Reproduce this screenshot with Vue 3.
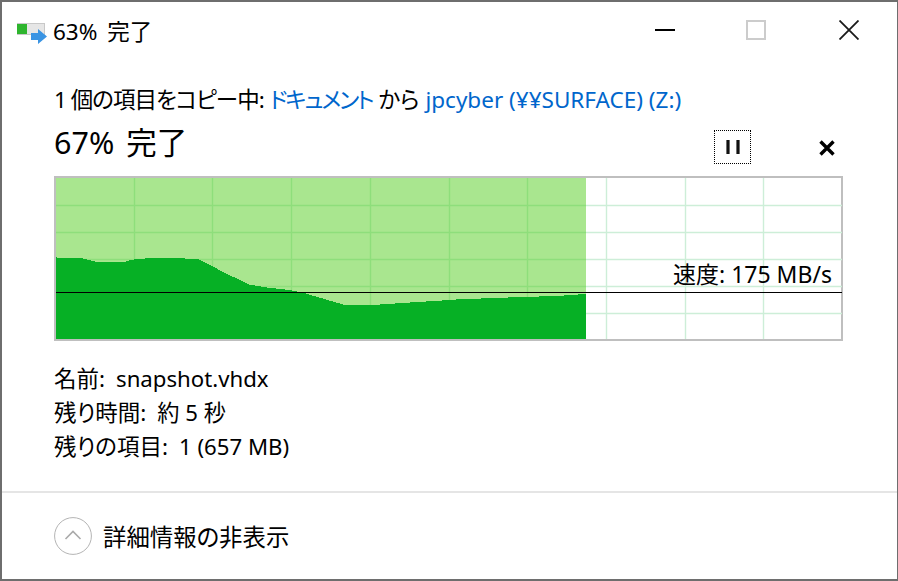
<script setup>
const verticals = [134, 212, 291, 370, 449, 527, 606, 685, 763]
const horizontals = [205, 232, 259, 286, 313]

// graph coords are page coords minus the plot's top-left (56, 178)
const curve = [
  [56, 256], [57, 257.7], [81, 258], [96, 261.7], [125, 261.7], [132, 259.7], [150, 258],
  [172, 258], [198, 259], [210, 265], [227, 274], [240, 280], [248, 284.3], [265, 287.3],
  [290, 290], [305, 293.3], [338, 303], [345, 305], [373, 305], [407, 302.7], [445, 300.3],
  [463, 299], [488, 298.3], [520, 297], [557, 296], [570, 295], [586, 294]
]
const areaPoints = [...curve, [586, 339], [56, 339]]
  .map(([x, y]) => `${x - 56},${y - 178}`)
  .join(' ')
</script>

<template>
  <div class="window">
    <header class="titlebar">
      <svg class="app-icon" width="30" height="22" viewBox="0 0 30 22">
        <rect x="0.5" y="0.5" width="27" height="11" fill="#e6e6e6" stroke="#c8c8c8" />
        <rect x="0" y="1" width="10" height="10" fill="#2eb52e" />
        <path d="M14 10h7V6l9 7.5-9 7.5v-4h-7z" fill="#3a94e3" />
      </svg>
      <span class="title">63% 完了</span>
      <div class="controls">
        <svg width="20" height="20" viewBox="0 0 20 20"><path d="M0 10h20" stroke="#000" stroke-width="2" /></svg>
        <svg class="maximize" width="20" height="20" viewBox="0 0 20 20"><rect x="1" y="1" width="18" height="18" fill="none" stroke="#ccc" stroke-width="2" /></svg>
        <svg width="20" height="20" viewBox="0 0 20 20"><path d="M0.5 0.5l19 19M19.5 0.5l-19 19" stroke="#1a1a1a" stroke-width="1.8" /></svg>
      </div>
    </header>

    <main class="content">
      <p class="source">
        <span class="tight">1 個の項目をコピー中:</span> <a class="link kana">ドキュメント</a> から <a class="link">jpcyber (¥¥SURFACE) (Z:)</a>
      </p>
      <div class="progress-row">
        <h1 class="percent">67% 完了</h1>
        <button class="pause" type="button">
          <svg width="14" height="14" viewBox="0 0 14 14"><path d="M2 0v14M12 0v14" stroke="#111" stroke-width="3.2" /></svg>
        </button>
        <button class="cancel" type="button">
          <svg width="16" height="16" viewBox="0 0 16 16"><path d="M1.5 1.5l13 13M14.5 1.5l-13 13" stroke="#000" stroke-width="3.4" /></svg>
        </button>
      </div>

      <div class="graph">
        <svg class="plot" width="786" height="161" viewBox="0 0 786 161">
          <rect x="0" y="0" width="530" height="161" fill="#a9e68f" />
          <g v-for="x in verticals" :key="x" stroke-width="1.4">
            <path :d="`M${x - 55.5} 0V161`" :stroke="x < 586 ? '#8ede7b' : '#cdeed8'" />
          </g>
          <g v-for="y in horizontals" :key="y" stroke-width="1.4">
            <path :d="`M0 ${y - 177.5}H530`" stroke="#8ede7b" />
            <path :d="`M530 ${y - 177.5}H786`" stroke="#cdeed8" />
          </g>
          <polygon :points="areaPoints" fill="#06b025" shape-rendering="crispEdges" />
          <path d="M0 114.5H786" stroke="#000" />
        </svg>
        <span class="speed">速度: 175 MB/s</span>
      </div>

      <dl class="details">
        <div class="detail"><dt>名前:</dt><dd>snapshot.vhdx</dd></div>
        <div class="detail"><dt>残り時間:</dt><dd>約 5 秒</dd></div>
        <div class="detail"><dt>残りの項目:</dt><dd>1 (657 MB)</dd></div>
      </dl>
    </main>

    <footer class="footer">
      <svg width="38" height="38" viewBox="0 0 38 38">
        <circle cx="19" cy="19" r="18.4" fill="#fff" stroke="#b4b4b4" />
        <path d="M11.5 22l7.5-7.5 7.5 7.5" fill="none" stroke="#aaa" stroke-width="1.6" />
      </svg>
      <span class="toggle">詳細情報の非表示</span>
    </footer>
  </div>
</template>

<style>
html, body {
  margin: 0;
  background: #fff;
}
</style>

<style scoped>
.window {
  box-sizing: border-box;
  width: 898px;
  height: 581px;
  border: 2px solid #6e6e6e;
  border-right-width: 1px;
  background: #fff;
  display: flex;
  flex-direction: column;
  font-family: "Noto Sans", "Noto Sans CJK JP", sans-serif;
  font-feature-settings: "palt";
  font-size: 22.5px;
  color: #000;
  overflow: hidden;
}
.titlebar {
  display: flex;
  align-items: center;
  height: 56px;
  padding-left: 15px;
  flex: none;
}
.app-icon {
  margin-top: 8px;
  margin-right: 6px;
  flex: none;
}
.title {
  word-spacing: 4px;
}
.controls {
  margin-left: auto;
  margin-right: 38px;
  display: flex;
  gap: 71px;
}
.maximize {
  margin-right: 2px;
}
.content {
  padding: 0 52px;
  flex: 1;
}
.source {
  margin: 26px 0 0;
  line-height: 32px;
  white-space: nowrap;
}
.tight {
  letter-spacing: -1px;
}
.link {
  color: #0066cc;
}
.kana {
  letter-spacing: -2px;
}
.progress-row {
  display: flex;
  align-items: flex-start;
  height: 44px;
  margin-top: 4px;
}
.percent {
  margin: 0;
  font-size: 30.5px;
  font-weight: 400;
  line-height: 44px;
  word-spacing: 4px;
}
.pause {
  box-sizing: border-box;
  margin: 10px 68px 0 auto;
  width: 37px;
  height: 34px;
  border: 1px dotted #000;
  background: #fff;
  padding: 0;
  display: flex;
  align-items: center;
  justify-content: center;
}
.cancel {
  border: 0;
  background: none;
  padding: 0;
  margin: 20px 10px 0 0;
  display: flex;
}
.graph {
  position: relative;
  box-sizing: border-box;
  width: 789px;
  height: 165px;
  margin-top: 12px;
  border: 2px solid #bfbfbf;
  background: #fff;
}
.plot {
  display: block;
}
.speed {
  position: absolute;
  right: 9px;
  top: 81px;
  font-size: 23px;
  line-height: 30px;
}
.details {
  margin: 21px 0 0;
  line-height: 34px;
}
.detail {
  display: flex;
  gap: 11px;
}
.detail dd {
  margin: 0;
  font-size: 22.2px;
}
.footer {
  flex: none;
  box-sizing: border-box;
  height: 88px;
  border-top: 2px solid #e5e5e5;
  padding-left: 52px;
  display: flex;
  align-items: center;
  gap: 11px;
  font-size: 23.4px;
}
</style>
